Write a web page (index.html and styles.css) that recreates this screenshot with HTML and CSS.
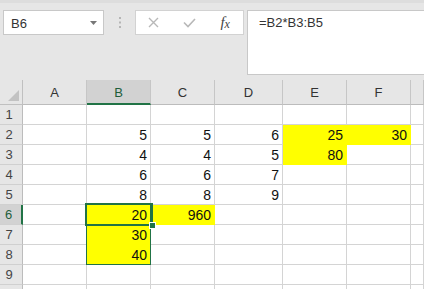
FILE: index.html
```html
<!DOCTYPE html>
<html lang="en">
<head>
  <meta charset="UTF-8">
  <title>Book1 - Excel</title>
  <link rel="stylesheet" href="styles.css">
</head>
<body>
  <div class="toolbar">
    <div class="namebox">
      <span>B6</span>
      <svg class="drop" width="7" height="4" viewBox="0 0 7 4"><path d="M0 0h7L3.5 4z" fill="#777"/></svg>
    </div>
    <div class="grip">
      <svg width="2" height="11" viewBox="0 0 2 11"><rect y="0" width="2" height="2" fill="#b5b5b5"/><rect y="4.5" width="2" height="2" fill="#b5b5b5"/><rect y="9" width="2" height="2" fill="#b5b5b5"/></svg>
    </div>
    <div class="fxbox">
      <span class="fxbtn">
        <svg width="11" height="11" viewBox="0 0 11 11"><path d="M1 1l9 9M10 1l-9 9" stroke="#b8b8b8" stroke-width="1.4" fill="none"/></svg>
      </span>
      <span class="fxbtn">
        <svg width="13" height="10" viewBox="0 0 13 10"><path d="M1 4.5l4 4L12 1" stroke="#b8b8b8" stroke-width="1.6" fill="none"/></svg>
      </span>
      <span class="fxbtn fx"><i>f</i><i class="x">x</i></span>
    </div>
    <div class="formula">=B2*B3:B5</div>
  </div>

  <div class="sheet">
    <div class="corner"></div>
    <div class="ch">A</div><div class="ch sel">B</div><div class="ch">C</div><div class="ch">D</div><div class="ch">E</div><div class="ch">F</div><div class="ch"></div>

    <div class="rh">1</div><div class="c"></div><div class="c"></div><div class="c"></div><div class="c"></div><div class="c"></div><div class="c"></div><div class="c"></div>
    <div class="rh">2</div><div class="c"></div><div class="c">5</div><div class="c">5</div><div class="c">6</div><div class="c hl">25</div><div class="c hl">30</div><div class="c"></div>
    <div class="rh">3</div><div class="c"></div><div class="c">4</div><div class="c">4</div><div class="c">5</div><div class="c hl">80</div><div class="c"></div><div class="c"></div>
    <div class="rh">4</div><div class="c"></div><div class="c">6</div><div class="c">6</div><div class="c">7</div><div class="c"></div><div class="c"></div><div class="c"></div>
    <div class="rh">5</div><div class="c"></div><div class="c">8</div><div class="c">8</div><div class="c">9</div><div class="c"></div><div class="c"></div><div class="c"></div>
    <div class="rh sel">6</div><div class="c"></div>
    <div class="c hl current">20
      <!-- spill range and active cell -->
      <span class="spill"></span>
      <span class="active"><span class="handle"></span></span>
    </div>
    <div class="c hl">960</div><div class="c"></div><div class="c"></div><div class="c"></div><div class="c"></div>
    <div class="rh">7</div><div class="c"></div><div class="c hl">30</div><div class="c"></div><div class="c"></div><div class="c"></div><div class="c"></div><div class="c"></div>
    <div class="rh">8</div><div class="c"></div><div class="c hl">40</div><div class="c"></div><div class="c"></div><div class="c"></div><div class="c"></div><div class="c"></div>
    <div class="rh">9</div><div class="c"></div><div class="c"></div><div class="c"></div><div class="c"></div><div class="c"></div><div class="c"></div><div class="c"></div>
    <div class="rh"></div><div class="c"></div><div class="c"></div><div class="c"></div><div class="c"></div><div class="c"></div><div class="c"></div><div class="c"></div>
  </div>
</body>
</html>
```

FILE: styles.css
```css
body {
  margin: 0;
  width: 424px;
  height: 289px;
  overflow: hidden;
  background: #fff;
  font-family: "Liberation Sans", Arial, sans-serif;
  color: #222;
}

/* formula bar */
.toolbar {
  height: 80px;
  box-sizing: border-box;
  background: #e6e6e6;
  border-top: 3px solid #dddddd;
  padding-top: 7px;
  display: flex;
  align-items: flex-start;
}
.namebox {
  margin-left: 3px;
  width: 101px;
  height: 25px;
  box-sizing: border-box;
  background: #fff;
  border: 1px solid #c8c8c8;
  display: flex;
  align-items: center;
  justify-content: space-between;
  padding: 1px 6px 0 7px;
  font-size: 13px;
  color: #333;
}
.grip {
  width: 31px;
  height: 25px;
  display: flex;
  align-items: center;
  justify-content: center;
}
.fxbox {
  width: 109px;
  height: 25px;
  box-sizing: border-box;
  background: #fff;
  border: 1px solid #d2d2d2;
  display: flex;
  align-items: center;
}
.fxbtn {
  width: 36px;
  display: flex;
  justify-content: center;
  align-items: center;
}
.fx {
  font-family: "Liberation Serif", "Times New Roman", serif;
  font-size: 15px;
  color: #444;
}
.fx .x {
  font-size: 12px;
  margin-top: 3px;
}
.formula {
  margin-left: 3px;
  flex: 1;
  height: 65px;
  box-sizing: border-box;
  background: #fff;
  border: 1px solid #c8c8c8;
  border-right: none;
  padding: 4px 11px;
  font-size: 13px;
  line-height: 16px;
  color: #333;
}

/* grid */
.sheet {
  display: grid;
  grid-template-columns: 23px 64px 64px 64px 68px 64px 64px 1fr;
  grid-template-rows: 25px repeat(10, 20px);
}
.corner, .ch, .rh, .c {
  box-sizing: border-box;
}
.corner {
  background: #e6e6e6;
  border-right: 1px solid #c0c0c0;
  border-bottom: 1px solid #c0c0c0;
  position: relative;
}
.corner::after {
  content: "";
  position: absolute;
  right: 3px;
  bottom: 3px;
  border-style: solid;
  border-width: 0 0 11px 11px;
  border-color: transparent transparent #c2c2c2 transparent;
}
.ch {
  background: #e6e6e6;
  border-right: 1px solid #c6c6c6;
  border-bottom: 1px solid #bcbcbc;
  font-size: 13px;
  color: #333;
  text-align: center;
  line-height: 24px;
  padding-top: 1px;
}
.ch.sel {
  background: #d2d2d2;
  border-bottom: 2px solid #217346;
  color: #1e5e3a;
}
.rh {
  background: #e6e6e6;
  border-right: 1px solid #bcbcbc;
  border-bottom: 1px solid #d0d0d0;
  font-size: 13px;
  color: #444;
  text-align: center;
  padding-right: 4px;
  line-height: 20px;
}
.rh.sel {
  background: #d2d2d2;
  border-right: 2px solid #217346;
  color: #1e5e3a;
}
.c {
  border-right: 1px solid #d4d4d4;
  border-bottom: 1px solid #d4d4d4;
  font-size: 14px;
  line-height: 19px;
  padding: 1px 3px 0 0;
  text-align: right;
  color: #111;
  overflow: hidden;
}
.hl {
  background: #ffff00;
  border-color: #ffff00;
}

.current {
  position: relative;
  overflow: visible;
}
.spill {
  position: absolute;
  left: -1px;
  top: -1px;
  width: 65px;
  height: 61px;
  box-sizing: border-box;
  border: 1px solid #217346;
}
.active {
  position: absolute;
  left: -2px;
  top: -2px;
  width: 68px;
  height: 23px;
  box-sizing: border-box;
  border: 2px solid #217346;
}
.handle {
  position: absolute;
  right: -5px;
  bottom: -5px;
  width: 5px;
  height: 5px;
  background: #217346;
  border: 1px solid #fff;
}
```
